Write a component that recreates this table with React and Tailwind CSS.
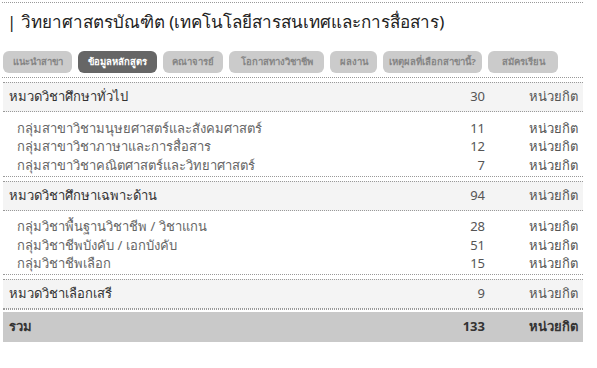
import React from 'react';

const tabs = [
  { label: 'แนะนำสาขา', w: 'w-[69px]' },
  { label: 'ข้อมูลหลักสูตร', w: 'w-[79px]', active: true },
  { label: 'คณาจารย์', w: 'w-[60px]' },
  { label: 'โอกาสทางวิชาชีพ', w: 'w-[95px]' },
  { label: 'ผลงาน', w: 'w-[47px]' },
  { label: 'เหตุผลที่เลือกสาขานี้?', w: 'w-[99px]' },
  { label: 'สมัครเรียน', w: 'w-[70px]' },
];

const groups = [
  {
    title: 'หมวดวิชาศึกษาทั่วไป',
    credits: 30,
    items: [
      ['กลุ่มสาขาวิชามนุษยศาสตร์และสังคมศาสตร์', 11],
      ['กลุ่มสาขาวิชาภาษาและการสื่อสาร', 12],
      ['กลุ่มสาขาวิชาคณิตศาสตร์และวิทยาศาสตร์', 7],
    ],
  },
  {
    title: 'หมวดวิชาศึกษาเฉพาะด้าน',
    credits: 94,
    items: [
      ['กลุ่มวิชาพื้นฐานวิชาชีพ / วิชาแกน', 28],
      ['กลุ่มวิชาชีพบังคับ / เอกบังคับ', 51],
      ['กลุ่มวิชาชีพเลือก', 15],
    ],
  },
  { title: 'หมวดวิชาเลือกเสรี', credits: 9, items: [] },
];

function Row({ label, value, head }) {
  return (
    <div className={`flex items-center ${head ? 'h-[28px] pl-[6px]' : 'h-[18.5px] pl-[14px]'} pr-[5px]`}>
      <span className={`flex-1 ${head ? 'text-[#333]' : 'text-[#666]'}`}>{label}</span>
      <span className="w-[40px] text-right text-[#555]">{value}</span>
      <span className="w-[93px] text-right text-[#555]">หน่วยกิต</span>
    </div>
  );
}

export default function App() {
  return (
    <div className="w-[597px] h-[368px] bg-white overflow-hidden font-['Tahoma','Noto_Sans','DejaVu_Sans',sans-serif]">
      <div className="w-[581px] ml-[2px] pt-[2px]">
        <div className="border-t border-dotted border-[#999]" />
        <h1 className="pl-[5px] pt-[6px] h-[36px] text-[17px] leading-[26px] text-[#222]">
          | วิทยาศาสตรบัณฑิต (เทคโนโลยีสารสนเทศและการสื่อสาร)
        </h1>

        {/* tabs */}
        <div className="flex gap-[6px] pl-[1px] pt-[12px] pb-[4px] border-b border-dotted border-[#999]">
          {tabs.map((t) => (
            <div
              key={t.label}
              className={`${t.w} h-[22px] rounded-[6px] flex items-center justify-center text-[9.5px] font-bold ${
                t.active ? 'bg-[#666] text-white' : 'bg-[#cbcbcb] text-[#858585]'
              }`}
            >
              {t.label}
            </div>
          ))}
        </div>

        {/* curriculum table */}
        <div className="pl-[1px] text-[13px]">
          {groups.map((g) => (
            <div key={g.title} className="mt-[4px] border-b border-dotted border-[#999]">
              <div className="border-t border-b border-dotted border-[#999] bg-[#f4f4f4]">
                <Row label={g.title} value={g.credits} head />
              </div>
              {g.items.length > 0 && (
                <div className="pt-[7px] pb-[1px]">
                  {g.items.map(([n, c]) => (
                    <Row key={n} label={n} value={c} />
                  ))}
                </div>
              )}
            </div>
          ))}
          <div className="mt-[2px] bg-[#c9c9c9] h-[30px] flex items-center pl-[6px] pr-[5px]">
            <span className="flex-1 font-bold text-[#333]">รวม</span>
            <span className="w-[40px] text-right font-bold text-[#333]">133</span>
            <span className="w-[93px] text-right font-bold text-[#333]">หน่วยกิต</span>
          </div>
        </div>
      </div>
    </div>
  );
}
